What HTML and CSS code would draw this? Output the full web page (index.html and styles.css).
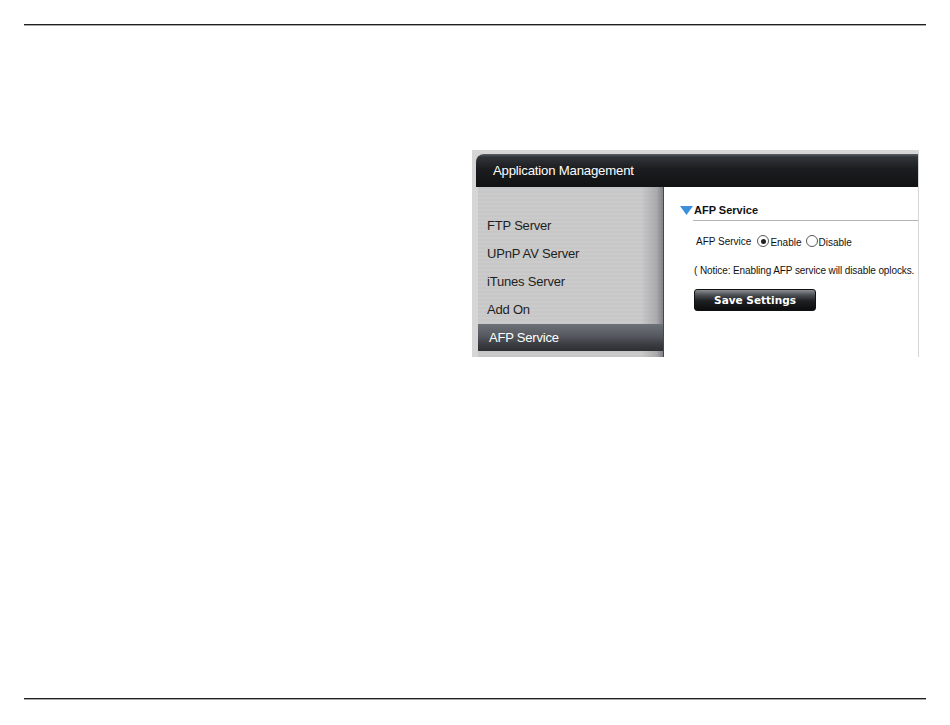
FILE: index.html
```html
<!DOCTYPE html>
<html lang="en">
<head>
  <meta charset="UTF-8">
  <title>Application Management - AFP Service</title>
  <link rel="stylesheet" href="styles.css">
</head>
<body>

  <div class="rule rule-top"></div>

  <div class="shot">
    <div class="shot-head">Application Management</div>
    <div class="shot-body">
      <ul class="menu">
        <li>FTP Server</li>
        <li>UPnP AV Server</li>
        <li>iTunes Server</li>
        <li>Add On</li>
        <li class="active">AFP Service</li>
      </ul>

      <div class="panel">
        <div class="panel-title">
          <svg class="arrow" width="13" height="9" viewBox="0 0 13 9"><path d="M0 0 H13 L6.5 9 Z" fill="#3d8fd9"/></svg>
          <span>AFP Service</span>
        </div>

        <div class="field">
          <span class="field-label">AFP Service</span>
          <label class="opt"><input type="radio" name="afp" checked>Enable</label>
          <label class="opt"><input type="radio" name="afp">Disable</label>
        </div>

        <p class="notice">( Notice: Enabling AFP service will disable oplocks.</p>

        <button class="btn">Save Settings</button>
      </div>
    </div>
  </div>

  <div class="rule rule-bottom"></div>

</body>
</html>
```

FILE: styles.css
```css
* {
  box-sizing: border-box;
  margin: 0;
  padding: 0;
}

body {
  font-family: 'Liberation Sans', Arial, sans-serif;
  background: #ffffff;
  color: #222;
  width: 950px;
  height: 725px;
  padding-top: 24px;
}

.rule {
  height: 1px;
  margin: 0 24px;
  background: #231f20;
  box-shadow: 0 0.5px 0 #555;
}

.shot {
  margin: 125px 0 0 472px;
  width: 447px;
  height: 207px;
  background: #d6d6d6;
  padding: 4px 1px 0 4px;
  display: flex;
  flex-direction: column;
}

.rule-bottom {
  margin-top: 341px;
}

.shot-head {
  height: 33px;
  border-radius: 8px 0 0 0;
  background: linear-gradient(#5a6068 0, #30343a 3px, #1c1d20 45%, #111213 100%);
  color: #fff;
  font-size: 13.2px;
  line-height: 34px;
  padding-left: 17px;
  letter-spacing: -0.2px;
}

.shot-body {
  flex: 1;
  display: flex;
  background: #fff;
}

.menu {
  list-style: none;
  width: 188px;
  padding-top: 25px;
  background:
    repeating-linear-gradient(#c7c7c7 0, #c7c7c7 2px, #cbcbcb 2px, #cbcbcb 4px),
    #c8c8c8;
  position: relative;
  border-right: 1px solid #45474b;
  border-left: 2px solid #d6d6d6;
}

.menu::after {
  content: '';
  position: absolute;
  top: 0;
  right: 0;
  bottom: 0;
  width: 22px;
  background: linear-gradient(90deg, rgba(160,160,165,0) 0, rgba(150,150,155,0.6) 70%, rgba(120,122,128,0.9) 100%);
}

.menu li {
  height: 28px;
  line-height: 28px;
  font-size: 13px;
  letter-spacing: -0.2px;
  padding-left: 9px;
  color: #1e1e1e;
  position: relative;
  z-index: 1;
}

.menu li.active {
  height: 27px;
  line-height: 27px;
  padding-left: 11px;
  color: #fff;
  background: linear-gradient(#6d7178 0, #55595f 45%, #3a3c41 75%, #2c2e32 100%);
}

.panel {
  flex: 1;
  padding: 16px 0 0 16px;
  font-size: 10px;
  color: #111;
}

.panel-title {
  display: flex;
  align-items: flex-start;
}

.arrow {
  margin-top: 3px;
}

.panel-title span {
  flex: 1;
  font-weight: bold;
  font-size: 11px;
  padding: 1px 0 4px 1px;
  border-bottom: 1px solid #b4b4b4;
}

.field {
  display: flex;
  align-items: center;
  margin: 13px 0 0 16px;
  height: 14px;
}

.field-label {
  margin-right: 6px;
}

.opt {
  display: flex;
  align-items: center;
  margin-right: 4px;
  padding-top: 2px;
}

.opt input {
  appearance: none;
  width: 12px;
  height: 12px;
  border: 1px solid #5a5a5a;
  border-radius: 50%;
  background: #fff;
  margin: -2px 1px 0 0;
  position: relative;
}

.opt input:checked::after {
  content: '';
  position: absolute;
  left: 2.5px;
  top: 2.5px;
  width: 5px;
  height: 5px;
  border-radius: 50%;
  background: #222;
}

.notice {
  margin: 17px 0 0 14px;
  white-space: nowrap;
  overflow: hidden;
  letter-spacing: -0.1px;
}

.btn {
  display: block;
  margin: 13px 0 0 14px;
  width: 122px;
  height: 22px;
  border: 1px solid #111;
  border-radius: 3px;
  background: linear-gradient(#8a8d92 0, #4c4f54 25%, #1e1f22 55%, #0d0d0e 100%);
  color: #fff;
  font-family: 'DejaVu Sans', sans-serif;
  font-weight: bold;
  font-size: 10.5px;
  cursor: pointer;
}
```
